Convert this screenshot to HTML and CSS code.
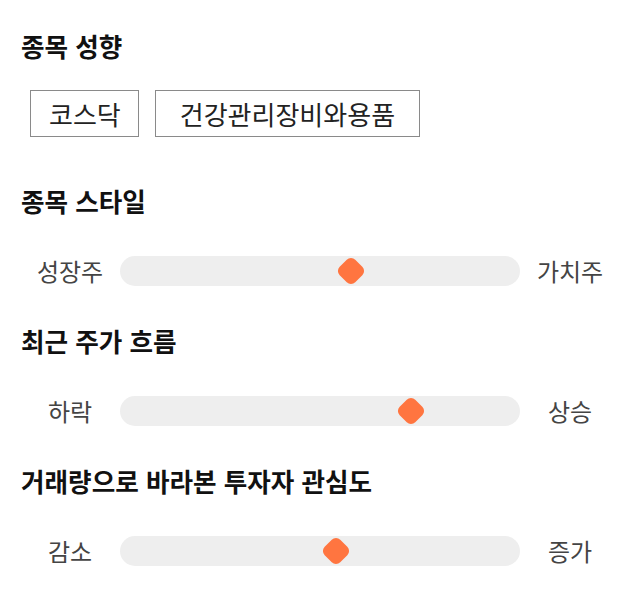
FILE: index.html
```html
<!DOCTYPE html>
<html lang="ko">
<head>
    <meta charset="UTF-8">
    <title>종목 분석</title>
    <meta name="viewport" content="width=device-width, initial-scale=1.0">
    <link rel="stylesheet" href="styles.css">
</head>
<body>
    <div class="stock-profile">
        <section class="profile-section">
            <h2>종목 성향</h2>
            <div class="tag-list">
                <span class="tag">코스닥</span>
                <span class="tag tag-wide">건강관리장비와용품</span>
            </div>
        </section>

        <section class="profile-section">
            <h2>종목 스타일</h2>
            <div class="slider-row">
                <span class="slider-label">성장주</span>
                <div class="slider-track">
                    <span class="slider-thumb" style="left: 57.75%"></span>
                </div>
                <span class="slider-label">가치주</span>
            </div>
        </section>

        <section class="profile-section">
            <h2>최근 주가 흐름</h2>
            <div class="slider-row">
                <span class="slider-label">하락</span>
                <div class="slider-track">
                    <span class="slider-thumb" style="left: 72.75%"></span>
                </div>
                <span class="slider-label">상승</span>
            </div>
        </section>

        <section class="profile-section">
            <h2>거래량으로 바라본 투자자 관심도</h2>
            <div class="slider-row">
                <span class="slider-label">감소</span>
                <div class="slider-track">
                    <span class="slider-thumb" style="left: 54%"></span>
                </div>
                <span class="slider-label">증가</span>
            </div>
        </section>
    </div>
</body>
</html>
```

FILE: styles.css
```css
* {
    margin: 0;
    padding: 0;
    box-sizing: border-box;
    font-family: 'Noto Sans CJK KR', 'Noto Sans', sans-serif;
}

body {
    background: #fff;
    color: #111;
}

.stock-profile {
    padding: 31px 20px 20px;
}

.profile-section + .profile-section {
    margin-top: 40px;
}

.profile-section:nth-child(2) {
    margin-top: 49px;
}

.profile-section h2 {
    font-size: 25.6px;
    font-weight: 700;
    line-height: 30px;
    padding-left: 1px;
}

.tag-list {
    display: flex;
    gap: 16px;
    margin-top: 29px;
    padding-left: 10px;
}

.tag {
    display: inline-block;
    height: 47px;
    line-height: 45px;
    padding: 0 17px 0 18px;
    border: 1px solid #8a8a8a;
    font-size: 26px;
    color: #222;
}

.tag-wide {
    padding: 0 24px;
}

.slider-row {
    display: flex;
    align-items: center;
    margin-top: 40px;
}

.slider-label {
    width: 100px;
    text-align: center;
    font-size: 24px;
    line-height: 30px;
    color: #444;
}

.slider-track {
    position: relative;
    flex: 1;
    height: 30px;
    background: #eeeeee;
    border-radius: 15px;
}

.slider-thumb {
    position: absolute;
    top: 50%;
    width: 22px;
    height: 22px;
    background: #ff7540;
    border-radius: 6px;
    transform: translate(-50%, -50%) rotate(45deg);
}
```
